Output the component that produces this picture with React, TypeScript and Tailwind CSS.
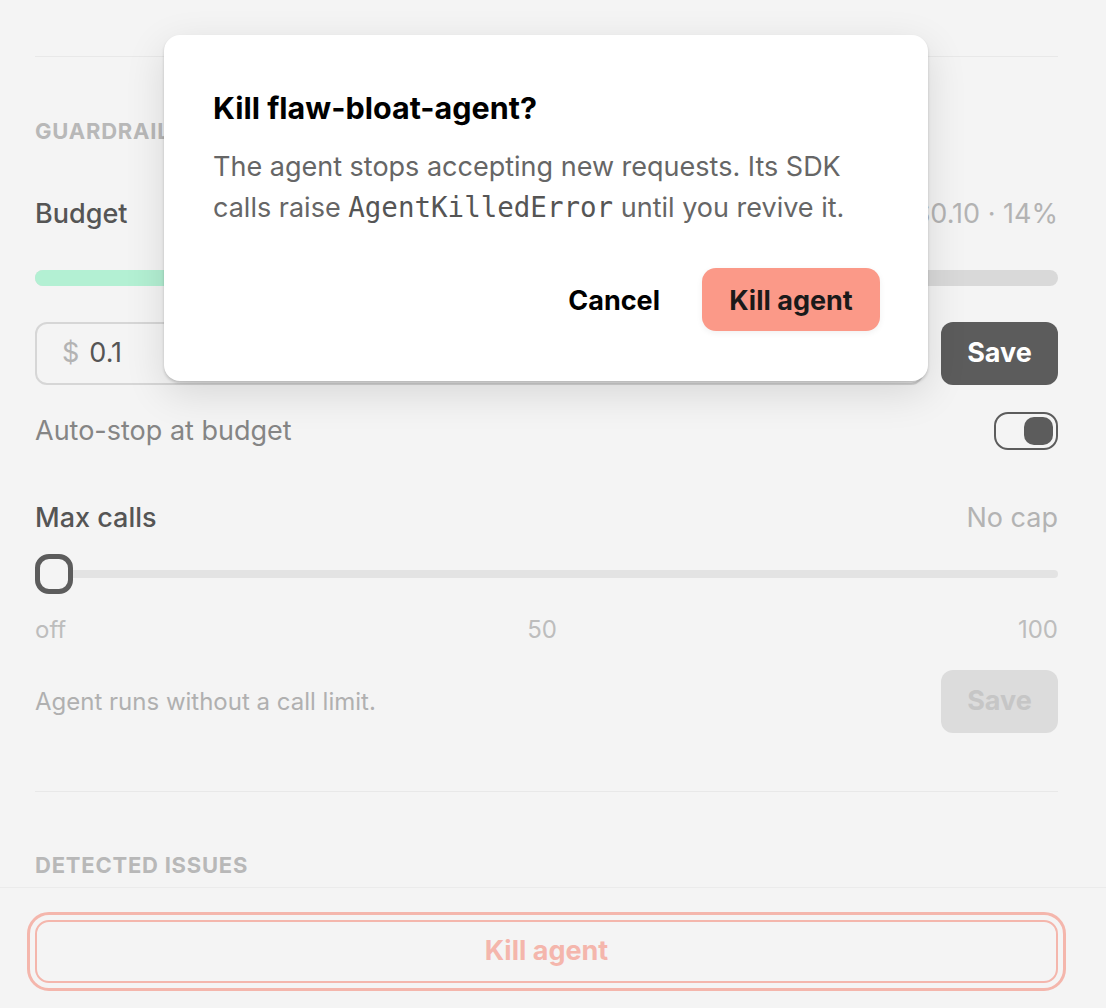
import React from 'react';

const font = { fontFamily: 'Inter, "Noto Sans", sans-serif' };

function KillDialog() {
    return (
        <div className="absolute left-[164px] top-[35px] w-[764px] rounded-[16px] bg-white pl-[49px] pr-[48px] pt-[55px] pb-[50px] shadow-[0_2px_3px_rgba(0,0,0,0.18),0_12px_40px_rgba(0,0,0,0.12)]">
            <h2 className="text-[30.5px] font-bold leading-[36px] text-black">Kill flaw-bloat-agent?</h2>
            <p className="mt-[20px] text-[27px] leading-[41px] text-[#666666]">
                The agent stops accepting new requests. Its SDK calls raise{' '}
                <code className="font-['DejaVu_Sans_Mono',monospace] text-[27.5px] text-[#555555]">AgentKilledError</code> until you revive it.
            </p>
            <div className="mt-[40px] flex items-center justify-end gap-[18px]">
                <button className="h-[63px] px-[24px] pt-[3px] text-[27px] font-bold text-black">Cancel</button>
                <button className="h-[63px] w-[178px] rounded-[14px] bg-[#fb9988] pt-[3px] text-[27px] font-bold text-[#1a1a1a] shadow-[0_2px_6px_rgba(0,0,0,0.06)]">
                    Kill agent
                </button>
            </div>
        </div>
    );
}

export default function App() {
    return (
        <div className="relative flex h-[1008px] w-[1106px] flex-col overflow-hidden bg-[#f4f4f4]" style={font}>
            <div className="flex-1 pl-[35px] pr-[48px] pt-[56px]">
                <div className="border-t border-[#e8e8e8]" />

                <h3 className="mt-[62px] text-[22px] font-bold uppercase leading-[24px] tracking-[0.035em] text-[#b8b8b8]">Guardrails</h3>

                <div className="mt-[55px] flex items-center justify-between text-[27px] leading-[32px]">
                    <span className="font-medium text-[#555555]">Budget</span>
                    <span className="text-[#b3b3b3]">$0.014 of $0.10 · 14%</span>
                </div>

                <div className="mt-[40px] h-[16px] rounded-full bg-[#d9d9d9]">
                    <div className="h-full w-[14%] rounded-full bg-[#b3f0d3]" />
                </div>

                <div className="mt-[36px] flex gap-[18px]">
                    <div className="flex h-[63px] flex-1 items-center gap-[10px] rounded-[12px] border-2 border-[#d6d6d6] px-[25px] text-[27px]">
                        <span className="text-[#b3b3b3]">$</span>
                        <span className="text-[#555555]">0.1</span>
                    </div>
                    <button className="h-[63px] w-[117px] rounded-[12px] bg-[#5c5c5c] text-[27px] font-bold text-white">Save</button>
                </div>

                <div className="mt-[27px] flex h-[38px] items-center justify-between">
                    <span className="text-[27px] leading-[32px] text-[#858585]">Auto-stop at budget</span>
                    <div className="flex h-[38px] w-[64px] items-center justify-end rounded-[14px] border-2 border-[#5c5c5c] pr-[3px]">
                        <div className="h-[28px] w-[29px] rounded-[10px] bg-[#5c5c5c]" />
                    </div>
                </div>

                <div className="mt-[52px] flex items-center justify-between text-[27px] leading-[32px]">
                    <span className="font-medium text-[#555555]">Max calls</span>
                    <span className="text-[#b3b3b3]">No cap</span>
                </div>

                <div className="relative mt-[20px] flex h-[40px] items-center">
                    <div className="h-[8px] w-full rounded-full bg-[#e3e3e3]" />
                    <div className="absolute left-0 top-0 h-[40px] w-[38px] rounded-[14px] border-[5px] border-[#5c5c5c] bg-[#f4f4f4]" />
                </div>

                <div className="mt-[22px] flex justify-between text-[24px] leading-[28px] text-[#bdbdbd]">
                    <span>off</span>
                    <span>50</span>
                    <span>100</span>
                </div>

                <div className="mt-[26px] flex items-center justify-between">
                    <span className="text-[24px] text-[#b0b0b0]">Agent runs without a call limit.</span>
                    <button className="h-[63px] w-[117px] rounded-[12px] bg-[#dcdcdc] text-[27px] font-bold text-[#c6c6c6]">Save</button>
                </div>

                <div className="mt-[58px] border-t border-[#e8e8e8]" />

                <h3 className="mt-[61px] text-[22px] font-bold uppercase leading-[24px] tracking-[0.035em] text-[#b8b8b8]">Detected issues</h3>
            </div>

            <div className="border-t border-[#ebebeb] pl-[35px] pr-[48px] pt-[32px] pb-[25px]">
                <button className="h-[63px] w-full rounded-[14px] border-2 border-[#f4b6ac] text-[27px] font-bold text-[#f4b6ac] outline-[3px] outline-offset-[5px] outline-[#f4b6ac]">
                    Kill agent
                </button>
            </div>

            <KillDialog />
        </div>
    );
}
